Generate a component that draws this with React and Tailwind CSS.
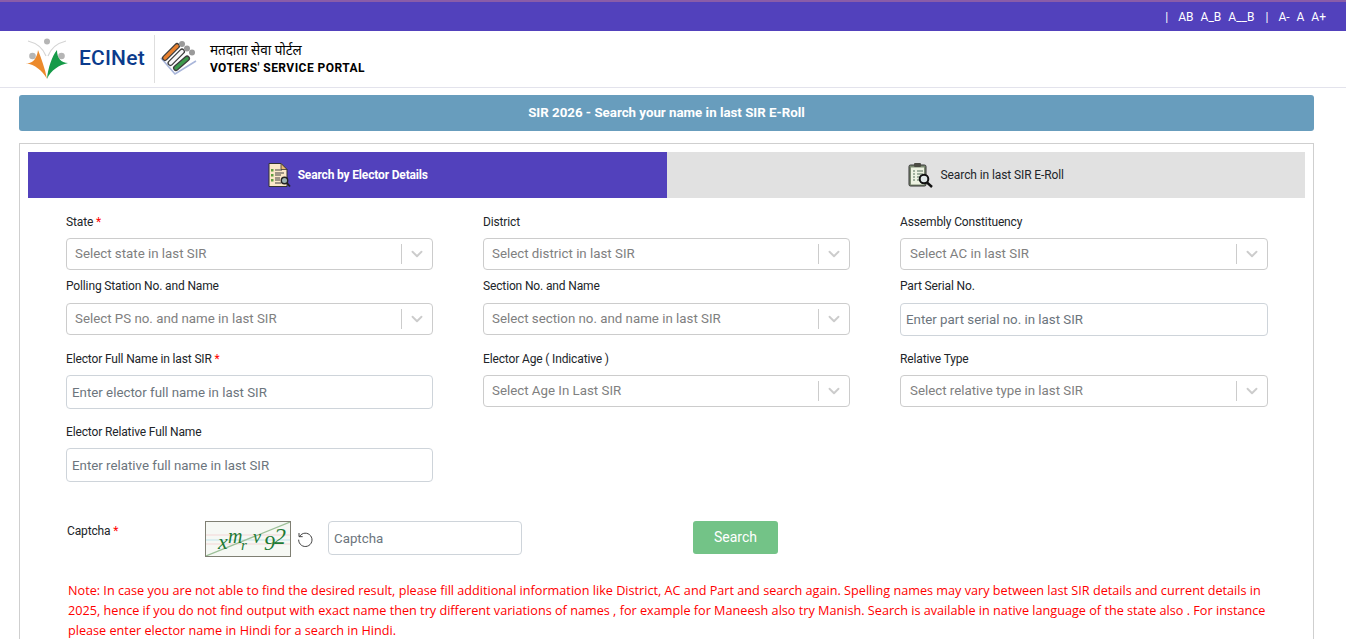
import { ChevronDown } from "lucide-react";

const Label = ({ text, required, className = "" }) => (
  <div className={`text-[12px] tracking-[-0.14px] leading-[18px] text-[#212529] ${className}`}>
    {text} {required && <span className="text-[#ff0000]">*</span>}
  </div>
);

const SelectBox = ({ placeholder, pad = "pl-2" }) => (
  <div className="h-[32px] flex items-center border border-[#cccccc] rounded-[4px] bg-white">
    <div className={`flex-1 ${pad} text-[13.3px] text-[#808080] truncate`}>{placeholder}</div>
    <div className="w-px h-[20px] bg-[#cccccc]"></div>
    <div className="w-[30px] flex justify-center">
      <ChevronDown className="w-[18px] h-[18px] text-[#cccccc]" strokeWidth={2.5} />
    </div>
  </div>
);

const TextBox = ({ placeholder, className = "h-[34px]" }) => (
  <input
    readOnly
    placeholder={placeholder}
    className={`w-full border border-[#ced4da] rounded-[4px] bg-white px-[5px] text-[13.3px] placeholder:text-[#6c757d] outline-none ${className}`}
  />
);

const ElectorIcon = () => (
  <svg width="24" height="26" viewBox="0 0 24 26">
    <path d="M2 1.5h12l6 6v17H2z" fill="#fbe8c8" stroke="#333" strokeWidth="1" />
    <path d="M14 1.5l6 6h-6z" fill="#e9b873" stroke="#333" strokeWidth="0.8" />
    <rect x="4" y="7" width="2.5" height="2.5" fill="#5f9e3e" />
    <rect x="4" y="12" width="2.5" height="2.5" fill="#5f9e3e" />
    <rect x="4" y="17" width="2.5" height="2.5" fill="#5f9e3e" />
    <path d="M8 8h7M8 11h9M8 13h6M8 16h5M8 18h5M8 21h6" stroke="#444" strokeWidth="1" />
    <circle cx="17.5" cy="18.5" r="3.2" fill="#9fb4b4" stroke="#222" strokeWidth="1.4" />
    <path d="M20 21l3 3.5" stroke="#222" strokeWidth="1.8" />
  </svg>
);

const RollIcon = () => (
  <svg width="26" height="26" viewBox="0 0 26 26">
    <rect x="1" y="3" width="17" height="21" rx="1.5" fill="#7c8a72" stroke="#333" strokeWidth="1" />
    <rect x="3" y="5.5" width="13" height="17" fill="#eef3e2" />
    <rect x="6" y="1" width="7" height="4" rx="1" fill="#4c4c44" />
    <path d="M5 9h2M9 9h6M5 12h2M9 12h6M5 15h2M9 15h3M5 18h2M9 18h2" stroke="#55705a" strokeWidth="1.2" />
    <circle cx="16" cy="17" r="4.3" fill="#dfe8e8" stroke="#111" strokeWidth="2" />
    <path d="M19 20.5l5 4.5" stroke="#111" strokeWidth="2.4" />
  </svg>
);

const EciLogo = () => (
  <svg width="42" height="42" viewBox="0 0 42 42">
    <path d="M2 3C10 5 17 10 20 18M40 3C32 5 25 10 22 18" stroke="#d4d4d4" strokeWidth="1.2" fill="none" />
    <circle cx="21" cy="3.5" r="3" fill="#b5b5b5" />
    <circle cx="6.5" cy="18" r="3.3" fill="#b5b5b5" />
    <circle cx="35.5" cy="18" r="3.3" fill="#b5b5b5" />
    <path d="M0 25C6 26 11 21 12 12C15 20 19 30 21 41C16 32 9 27 0 25z" fill="#ec8a2c" />
    <path d="M21 41C22 30 26 18 31 12C31 20 35 25 42 25C33 27 25 32 21 41z" fill="#159a48" />
  </svg>
);

const EvmLogo = () => (
  <svg width="38" height="36" viewBox="0 0 38 36">
    <path d="M1 17L15 33L36 20" stroke="#a9b6da" strokeWidth="1.6" fill="none" />
    <path d="M5 17L17 5M10.5 22L22 10.5M16 27L27 17.5" stroke="#3d3d3d" strokeWidth="6" strokeLinecap="round" />
    <path d="M5 17L17 5" stroke="#e8802e" strokeWidth="3.4" strokeLinecap="round" />
    <path d="M10.5 22L22 10.5" stroke="#f7f7f7" strokeWidth="3.4" strokeLinecap="round" />
    <path d="M16 27L27 17.5" stroke="#3c9a4c" strokeWidth="3.4" strokeLinecap="round" />
    <circle cx="22" cy="3" r="3" fill="#9a9a9a" />
    <circle cx="27" cy="7.5" r="3" fill="#9a9a9a" />
    <circle cx="32" cy="11.5" r="3" fill="#9a9a9a" />
  </svg>
);

const Captcha = () => (
  <svg width="84" height="34" viewBox="0 0 84 34" className="border border-[#7f7f73] box-content bg-[#f6f8f4]">
    <path d="M0 13h84M0 22h84" stroke="#f3d6d6" strokeWidth="1" />
    <path d="M0 18h84" stroke="#bfe3ea" strokeWidth="1" />
    <path d="M0 34L84 0" stroke="#9cbf98" strokeWidth="1.2" />
    <g fontFamily="Liberation Serif, serif" fontStyle="italic" fill="#1d7a35">
      <text x="12" y="27" fontSize="22">x</text>
      <text x="22" y="21" fontSize="20">m</text>
      <text x="35" y="28" fontSize="15">r</text>
      <text x="47" y="21" fontSize="18">v</text>
      <text x="58" y="28" fontSize="22">9</text>
      <text x="68" y="22" fontSize="24">2</text>
    </g>
  </svg>
);

export default function App() {
  return (
    <div className="min-h-screen h-[639px] overflow-hidden bg-white font-['Roboto',sans-serif] text-[#212529]">
      <div className="h-[31px] bg-[#5241bc] border-t-2 border-t-[#8a5ca8] flex items-center justify-end pr-[20px] text-[12px] text-white">
        <span className="mr-[10px]">|</span>
        <span className="mr-[7px]">AB</span>
        <span className="mr-[7px]">A_B</span>
        <span className="mr-[11px]">A__B</span>
        <span className="mr-[10px]">|</span>
        <span className="mr-[7px]">A-</span>
        <span className="mr-[7px]">A</span>
        <span>A+</span>
      </div>

      <div className="h-[57px] border-b border-[#e3e3ec] flex items-center pl-[26px]">
        <EciLogo />
        <span className="ml-[11px] text-[21px] font-medium text-[#0b3b8c] tracking-[0.2px]">ECINet</span>
        <div className="ml-[9px] w-px h-[48px] bg-[#dedede]"></div>
        <div className="ml-[5px] flex"><EvmLogo /></div>
        <div className="ml-[12px] text-black">
          <div className="text-[13.5px] leading-[18px] font-['Noto_Sans','Noto_Sans_CJK_SC',sans-serif]">मतदाता सेवा पोर्टल</div>
          <div className="text-[12px] leading-[18px] font-bold tracking-[0.45px]">VOTERS' SERVICE PORTAL</div>
        </div>
      </div>

      <div className="mt-[7px] mx-[19px] mr-[32px] h-[36px] rounded-[3px] bg-[#689dbd] flex items-center justify-center text-[13.3px] font-bold text-white">
        SIR 2026 - Search your name in last SIR E-Roll
      </div>

      <div className="mt-[12px] ml-[19px] mr-[32px] border border-[#cfcfcf] px-[8px] pt-[8px] pb-[20px]">
        <div className="flex h-[46px]">
          <div className="w-1/2 bg-[#5241bc] flex items-center justify-center gap-[7px] text-white text-[12px] tracking-[-0.16px] font-bold">
            <ElectorIcon />
            <span>Search by Elector Details</span>
          </div>
          <div className="w-1/2 bg-[#e1e1e1] flex items-center justify-center gap-[7px] text-[12px] tracking-[-0.1px] text-[#212529]">
            <RollIcon />
            <span>Search in last SIR E-Roll</span>
          </div>
        </div>

        <div className="grid grid-cols-[367px_367px_368px] gap-x-[50px] ml-[38px] mt-[15px]">
          <div>
            <Label text="State" required />
            <div className="mt-[7px]"><SelectBox placeholder="Select state in last SIR" /></div>
          </div>
          <div>
            <Label text="District" />
            <div className="mt-[7px]"><SelectBox placeholder="Select district in last SIR" /></div>
          </div>
          <div>
            <Label text="Assembly Constituency" />
            <div className="mt-[7px]"><SelectBox placeholder="Select AC in last SIR" pad="pl-[9px]" /></div>
          </div>

          <div className="mt-[7px]">
            <Label text="Polling Station No. and Name" />
            <div className="mt-[8px]"><SelectBox placeholder="Select PS no. and name in last SIR" /></div>
          </div>
          <div className="mt-[7px]">
            <Label text="Section No. and Name" />
            <div className="mt-[8px]"><SelectBox placeholder="Select section no. and name in last SIR" /></div>
          </div>
          <div className="mt-[7px]">
            <Label text="Part Serial No." />
            <div className="mt-[8px]"><TextBox placeholder="Enter part serial no. in last SIR" className="h-[33px]" /></div>
          </div>

          <div className="mt-[14px]">
            <Label text="Elector Full Name in last SIR" required />
            <div className="mt-[7px]"><TextBox placeholder="Enter elector full name in last SIR" /></div>
          </div>
          <div className="mt-[14px]">
            <Label text="Elector Age ( Indicative )" />
            <div className="mt-[7px]"><SelectBox placeholder="Select Age In Last SIR" /></div>
          </div>
          <div className="mt-[14px]">
            <Label text="Relative Type" />
            <div className="mt-[7px]"><SelectBox placeholder="Select relative type in last SIR" pad="pl-[9px]" /></div>
          </div>

          <div className="mt-[14px]">
            <Label text="Elector Relative Full Name" />
            <div className="mt-[7px]"><TextBox placeholder="Enter relative full name in last SIR" /></div>
          </div>
        </div>

        <div className="flex items-start ml-[39px] mt-[39px]">
          <div className="w-[138px] pt-[1px]"><Label text="Captcha" required /></div>
          <Captcha />
          <svg width="16" height="16" viewBox="0 0 24 24" fill="none" stroke="#333" strokeWidth="1.4" className="ml-[6px] mt-[10px]">
            <path d="M4 8a10 10 0 1 1-1.5 5" />
            <path d="M3 3v5.5h5.5" />
          </svg>
          <div className="ml-[15px] w-[194px]"><TextBox placeholder="Captcha" /></div>
          <button className="ml-[171px] h-[33px] w-[85px] rounded-[3px] bg-[#73c387] text-white text-[14px]">Search</button>
        </div>

        <p className="ml-[40px] mr-[20px] mt-[23px] text-[12.67px] leading-[20px] text-[#ff0000] font-['Open_Sans',sans-serif]">
          Note: In case you are not able to find the desired result, please fill additional information like District, AC and Part and search again. Spelling names may vary between last SIR details and current details in 2025, hence if you do not find output with exact name then try different variations of names , for example for Maneesh also try Manish. Search is available in native language of the state also . For instance please enter elector name in Hindi for a search in Hindi.
        </p>
      </div>
    </div>
  );
}
